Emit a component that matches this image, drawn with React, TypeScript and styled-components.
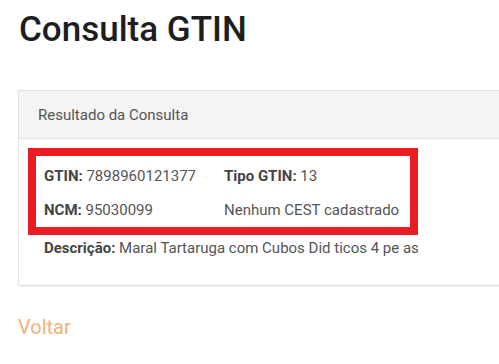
import React from "react";
import styled, { createGlobalStyle } from "styled-components";

const Global = createGlobalStyle`
  html, body { margin: 0; padding: 0; background: #fff; overflow: hidden; }
  body { font-family: Roboto, "Liberation Sans", Arial, sans-serif; color: #555; }
`;

const Page = styled.div`
  width: 700px;
  padding: 0 0 0 18px;
`;

const Title = styled.h1`
  margin: 0;
  padding-top: 10px;
  font-size: 35px;
  font-weight: 500;
  line-height: 40px;
  color: #1e1e1e;
  padding-left: 1px;
`;

const Panel = styled.div`
  margin-top: 40px;
  border: 1px solid #e2e2e2;
  background: #fff;
  box-shadow: 0 1px 1px rgba(0,0,0,0.04);
`;

const PanelHeading = styled.div`
  background: #f4f4f4;
  border-bottom: 1px solid #e4e4e4;
  height: 47px;
  display: flex;
  align-items: center;
  padding-left: 19px;
  font-size: 15px;
  color: #555;
`;

const PanelBody = styled.div`
  padding: 9px 0 26px 9px;
`;

const Highlight = styled.div`
  width: 366px;
  height: 68px;
  border: 8px solid #ec1c24;
  padding: 3px 0 0 8px;
  box-sizing: content-box;
`;

const Row = styled.div`
  display: grid;
  grid-template-columns: 180px auto;
  height: 34px;
  align-items: center;
  font-size: 15px;
  color: #555;
  white-space: nowrap;
`;

const Line = styled.div`
  font-size: 15px;
  color: #555;
  height: 22px;
  display: flex;
  align-items: center;
  padding-left: 16px;
  margin-top: 2px;
  white-space: nowrap;
`;

const Label = styled.b`
  font-weight: 700;
  color: #444;
`;

const BackLink = styled.a`
  display: inline-block;
  margin-top: 30px;
  font-size: 20px;
  line-height: 23px;
  color: #f0b27a;
  text-decoration: none;
`;

export default function App() {
  return (
    <>
      <Global />
      <Page>
        <Title>Consulta GTIN</Title>
        <Panel>
          <PanelHeading>Resultado da Consulta</PanelHeading>
          <PanelBody>
            <Highlight>
              <Row>
                <span><Label>GTIN:</Label> 7898960121377</span>
                <span><Label>Tipo GTIN:</Label> 13</span>
              </Row>
              <Row>
                <span><Label>NCM:</Label> 95030099</span>
                <span>Nenhum CEST cadastrado</span>
              </Row>
            </Highlight>
            <Line>
              <Label>Descrição:</Label>&nbsp;Maral Tartaruga com Cubos Did ticos 4 pe as
            </Line>
          </PanelBody>
        </Panel>
        <BackLink href="#">Voltar</BackLink>
      </Page>
    </>
  );
}
